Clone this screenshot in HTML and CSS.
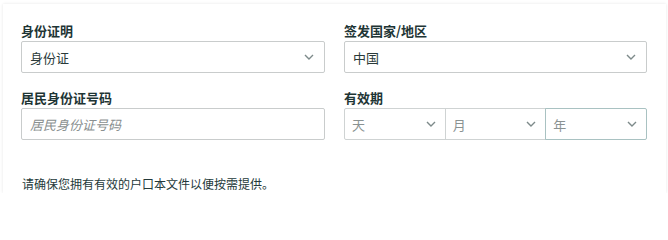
FILE: index.html
```html
<!DOCTYPE html>
<html lang="zh-CN">
<head>
<meta charset="utf-8">
<link rel="stylesheet" href="styles.css">
</head>
<body>
<div class="card">
  <div class="grid">
    <div class="field">
      <div class="label">身份证明</div>
      <div class="select"><span class="value">身份证</span><svg class="chev" viewBox="0 0 10 6"><path d="M1 1l4 4 4-4"/></svg></div>
    </div>
    <div class="field">
      <div class="label">签发国家/地区</div>
      <div class="select"><span class="value">中国</span><svg class="chev" viewBox="0 0 10 6"><path d="M1 1l4 4 4-4"/></svg></div>
    </div>
    <div class="field">
      <div class="label">居民身份证号码</div>
      <div class="input"><span class="placeholder">居民身份证号码</span></div>
    </div>
    <div class="field">
      <div class="label">有效期</div>
      <div class="dates">
        <div class="dsel"><span class="dval">天</span><svg class="chev" viewBox="0 0 10 6"><path d="M1 1l4 4 4-4"/></svg></div>
        <div class="dsel"><span class="dval">月</span><svg class="chev" viewBox="0 0 10 6"><path d="M1 1l4 4 4-4"/></svg></div>
        <div class="dsel active"><span class="dval">年</span><svg class="chev" viewBox="0 0 10 6"><path d="M1 1l4 4 4-4"/></svg></div>
      </div>
    </div>
  </div>
  <p class="note">请确保您拥有有效的户口本文件以便按需提供。</p>
</div>
</body>
</html>
```
FILE: styles.css
```css
html, body {
  margin: 0;
  background: #ffffff;
  font-family: "Noto Sans CJK SC", "Noto Sans", sans-serif;
}
.card {
  margin: 4px 2px 0 3px;
  height: 170px;
  padding: 19px 18px 0 18px;
  box-shadow: 0 0 3px rgba(0, 0, 0, 0.10);
  background: #fff;
}
.grid {
  display: grid;
  grid-template-columns: 304px 303px;
  column-gap: 19px;
  row-gap: 17px;
}
.label {
  font-size: 13px;
  line-height: 16px;
  font-weight: 700;
  color: #1e3535;
  margin-bottom: 2px;
}
.select, .input {
  box-sizing: border-box;
  height: 32px;
  border: 1px solid #c9cccc;
  border-radius: 2px;
  display: flex;
  align-items: center;
  padding: 0 10px 0 8px;
}
.value {
  flex: 1;
  font-size: 13px;
  color: #2a3a3a;
}
.placeholder {
  font-size: 13px;
  font-style: italic;
  color: #8a9090;
}
.chev {
  width: 10px;
  height: 6px;
  fill: none;
  stroke: #7d8a8a;
  stroke-width: 1.4;
}
.dates {
  display: flex;
  height: 32px;
}
.dsel {
  box-sizing: border-box;
  flex: 1;
  display: flex;
  align-items: center;
  border: 1px solid #cfd3d3;
  margin-left: -1px;
  padding: 0 9px 0 7px;
}
.dsel:first-child {
  margin-left: 0;
  border-radius: 2px 0 0 2px;
}
.dsel.active {
  border-color: #a9c2c2;
  border-radius: 0 2px 2px 0;
  position: relative;
}
.dval {
  flex: 1;
  font-size: 13px;
  color: #8a9292;
}
.note {
  margin: 36px 0 0 1px;
  font-size: 12px;
  line-height: 16px;
  color: #24393a;
}
```
